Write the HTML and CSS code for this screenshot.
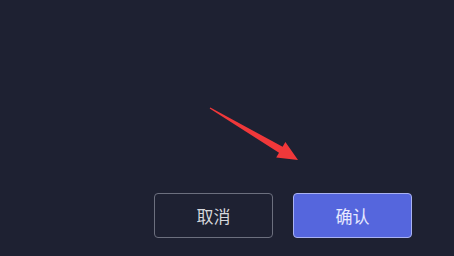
FILE: index.html
```html
<!DOCTYPE html>
<html lang="zh-CN">
<head>
    <meta charset="UTF-8">
    <meta name="viewport" content="width=device-width, initial-scale=1.0">
    <title>确认</title>
    <link rel="stylesheet" href="styles.css">
</head>
<body>
    <div class="dialog">
        <!-- 指示箭头 -->
        <svg class="arrow" width="454" height="256" viewBox="0 0 454 256">
            <polygon fill="#f0383a" points="209.7,108.4 279.0,152.8 276.2,157.6 298,160 285.4,142.0 282.6,146.8 210.3,107.6"/>
        </svg>
        <div class="footer">
            <button class="btn btn_cancel">取消</button>
            <button class="btn btn_ok">确认</button>
        </div>
    </div>
</body>
</html>
```

FILE: styles.css
```css
* {
    margin: 0;
    padding: 0;
    box-sizing: border-box;
}

html,
body {
    width: 454px;
    height: 256px;
    overflow: hidden;
    background-color: #1e2132;
}

.dialog {
    position: relative;
    height: 256px;
    display: flex;
    flex-direction: column;
    justify-content: flex-end;
}

.arrow {
    position: absolute;
    left: 0;
    top: 0;
}

.footer {
    display: flex;
    justify-content: flex-end;
    gap: 20px;
    padding: 0 42px 18px 0;
}

.btn {
    width: 119px;
    height: 45px;
    border-radius: 4px;
    font-family: "Noto Sans CJK SC", "Noto Sans", sans-serif;
    font-size: 17px;
    line-height: 43px;
    text-align: center;
    cursor: pointer;
}

.btn_cancel {
    border: 1px solid #6c6f7e;
    background-color: #1e2132;
    color: #d6d7dc;
}

.btn_ok {
    border: 1px solid #a9b2f2;
    background-color: #5566dd;
    color: #e6e9ff;
}
```
